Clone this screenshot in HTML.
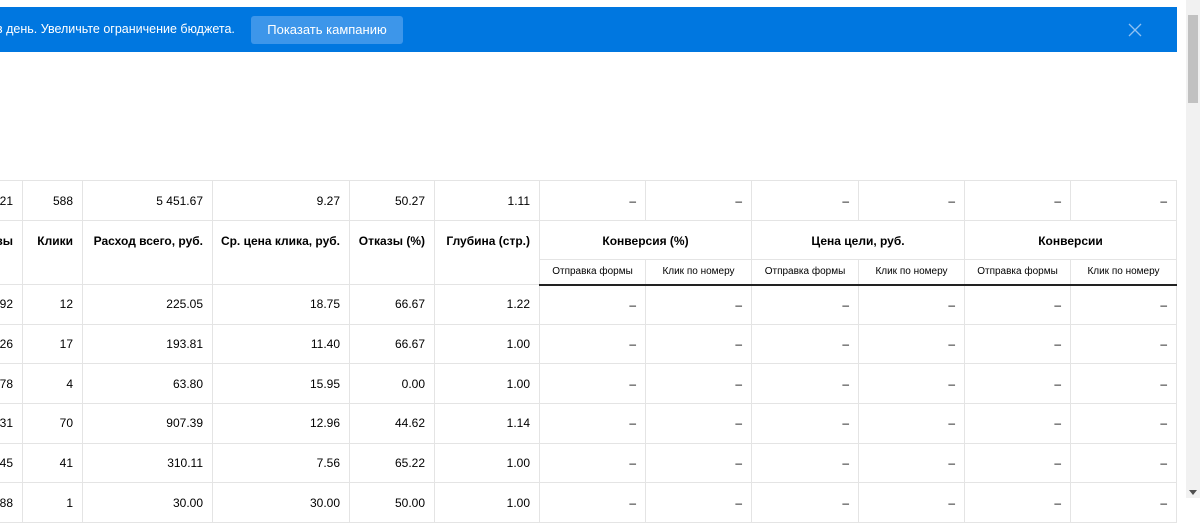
<!DOCTYPE html>
<html><head><meta charset="utf-8"><style>
*{margin:0;padding:0;box-sizing:border-box}
html,body{width:1200px;height:498px;overflow:hidden;background:#fff;font-family:"Liberation Sans",sans-serif;color:#000}
.banner{position:absolute;left:0;top:7px;width:1177px;height:45px;background:#0077e0}
.banner .msg{position:absolute;left:-4px;top:15px;font-size:12.5px;color:#fff;white-space:nowrap}
.btn{position:absolute;left:251px;top:9px;width:152px;height:28px;background:#3d96ea;border-radius:3px;color:#fff;font-size:13px;text-align:center;line-height:28px}
.x{position:absolute;left:1128px;top:16px}
.sb{position:absolute;left:1186px;top:0;width:14px;height:498px;background:#f1f1f1}
.thumb{position:absolute;left:1188px;top:15px;width:10px;height:88px;background:#c1c1c1}
table{position:absolute;left:-60px;top:180px;width:1237px;border-collapse:collapse;table-layout:fixed;font-size:12px}
td,th{border:1px solid #e4e4e4;text-align:right;padding:0 9px 0 0;white-space:nowrap;overflow:hidden}
th{font-weight:bold;text-align:right;vertical-align:top;padding-top:13px}
th.c{text-align:center;padding-right:0}
tr.tot td{height:40px}
tr.h th{height:39px}
tr.s th{height:25px;font-weight:normal;font-size:10px;text-align:center;padding:0;vertical-align:middle;border-bottom:2px solid #222}
tr.d td{height:39.7px}
</style></head><body>
<div class="banner"><div class="msg">в день. Увеличьте ограничение бюджета.</div><div class="btn">Показать кампанию</div>
<svg class="x" width="14" height="14" viewBox="0 0 14 14"><path d="M1 1L13 13M13 1L1 13" stroke="#8fc1f2" stroke-width="1.3" fill="none"/></svg></div>
<table>
<colgroup><col style="width:82px"><col style="width:60px"><col style="width:130px"><col style="width:137px"><col style="width:85px"><col style="width:105px"><col style="width:106px"><col style="width:106px"><col style="width:107px"><col style="width:106px"><col style="width:106px"><col style="width:106px"></colgroup>
<tr class="tot"><td>4 321</td><td>588</td><td>5 451.67</td><td>9.27</td><td>50.27</td><td>1.11</td><td>–</td><td>–</td><td>–</td><td>–</td><td>–</td><td>–</td></tr>
<tr class="h"><th rowspan="2">Показы</th><th rowspan="2">Клики</th><th rowspan="2">Расход всего, руб.</th><th rowspan="2">Ср. цена клика, руб.</th><th rowspan="2">Отказы (%)</th><th rowspan="2">Глубина (стр.)</th><th colspan="2" class="c">Конверсия (%)</th><th colspan="2" class="c">Цена цели, руб.</th><th colspan="2" class="c">Конверсии</th></tr>
<tr class="s"><th>Отправка формы</th><th>Клик по номеру</th><th>Отправка формы</th><th>Клик по номеру</th><th>Отправка формы</th><th>Клик по номеру</th></tr>
<tr class="d"><td>1 092</td><td>12</td><td>225.05</td><td>18.75</td><td>66.67</td><td>1.22</td><td>–</td><td>–</td><td>–</td><td>–</td><td>–</td><td>–</td></tr>
<tr class="d"><td>926</td><td>17</td><td>193.81</td><td>11.40</td><td>66.67</td><td>1.00</td><td>–</td><td>–</td><td>–</td><td>–</td><td>–</td><td>–</td></tr>
<tr class="d"><td>178</td><td>4</td><td>63.80</td><td>15.95</td><td>0.00</td><td>1.00</td><td>–</td><td>–</td><td>–</td><td>–</td><td>–</td><td>–</td></tr>
<tr class="d"><td>1 431</td><td>70</td><td>907.39</td><td>12.96</td><td>44.62</td><td>1.14</td><td>–</td><td>–</td><td>–</td><td>–</td><td>–</td><td>–</td></tr>
<tr class="d"><td>645</td><td>41</td><td>310.11</td><td>7.56</td><td>65.22</td><td>1.00</td><td>–</td><td>–</td><td>–</td><td>–</td><td>–</td><td>–</td></tr>
<tr class="d"><td>88</td><td>1</td><td>30.00</td><td>30.00</td><td>50.00</td><td>1.00</td><td>–</td><td>–</td><td>–</td><td>–</td><td>–</td><td>–</td></tr>
</table>
<div class="sb"></div><div class="thumb"></div>
<svg style="position:absolute;left:1189px;top:490px" width="8" height="5"><path d="M0 0H8L4 5Z" fill="#505050"/></svg>
</body></html>
